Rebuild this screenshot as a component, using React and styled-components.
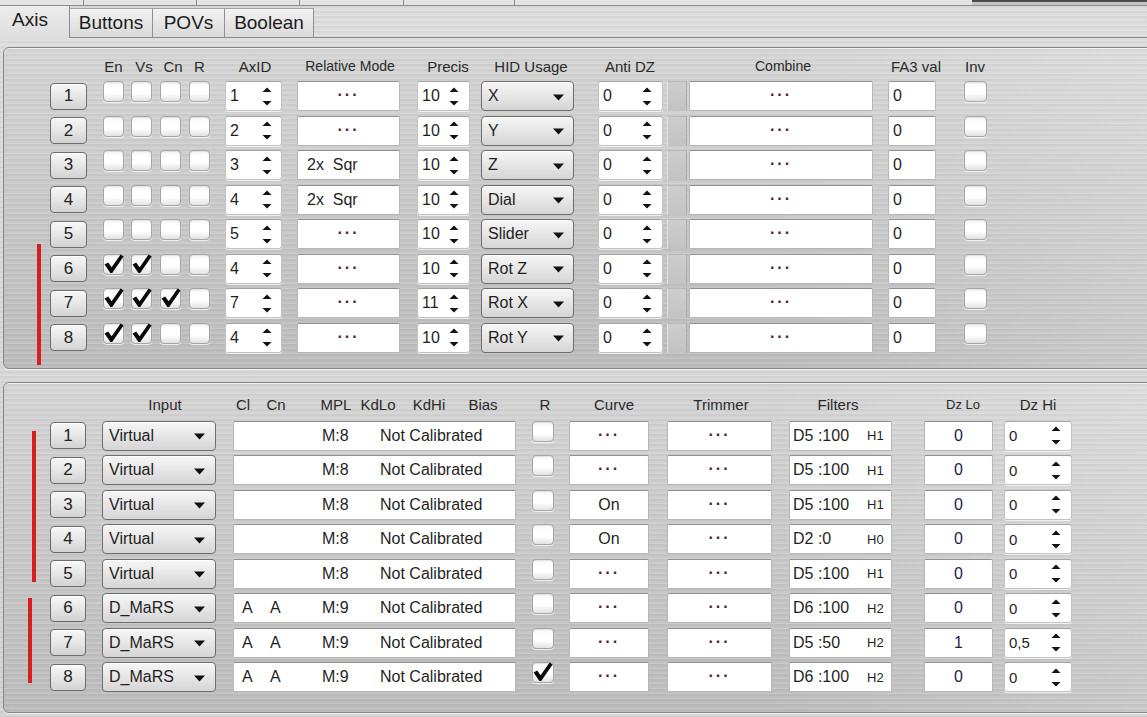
import React from 'react';
import styled, { createGlobalStyle } from 'styled-components';

const GlobalStyle = createGlobalStyle`
  html, body {
    margin: 0;
    padding: 0;
    background: #cfcfcf;
    overflow: hidden;
  }
  body {
    font-family: "Liberation Sans", Arial, sans-serif;
    color: #1f1f1f;
  }
`;

const brushed = `repeating-linear-gradient(180deg, rgba(255,255,255,0.12) 0px, rgba(255,255,255,0.12) 1px, rgba(0,0,0,0.03) 1px, rgba(0,0,0,0.03) 3px, rgba(255,255,255,0) 3px, rgba(255,255,255,0) 5px)`;

// turns [x0, x1] spans (page coords) into width + left margin for flex rows
const BASE = 4;
const place = (spans) => {
  let prev = BASE;
  return spans.map(([x0, x1]) => {
    const r = { $ml: x0 - prev, $w: x1 - x0 };
    prev = x1;
    return r;
  });
};

const Window = styled.div`
  width: 1147px;
  height: 717px;
  overflow: hidden;
  background: ${brushed}, linear-gradient(180deg, #dedede 0%, #d3d3d3 100%);
`;

const OldTabs = styled.div`
  display: flex;
  height: 5px;
  border-bottom: 1px solid #8e8e8e;
  background: #e4e4e4;
`;

const OldTab = styled.div`
  flex: none;
  width: ${(p) => p.$w}px;
  border-right: ${(p) => (p.$edge ? '1px solid #8a8a8a' : 'none')};
  background: ${(p) => (p.$dark ? 'linear-gradient(#4c4c4c 0 2px, #c4c4c4 2px)' : 'transparent')};
`;

const TabBar = styled.div`
  display: flex;
  align-items: flex-end;
  height: 31px;
  border-bottom: 1px solid #8a8a8a;
`;

const Tab = styled.div`
  flex: none;
  box-sizing: border-box;
  width: ${(p) => p.$w}px;
  height: ${(p) => (p.$active ? 32 : 29)}px;
  margin-bottom: ${(p) => (p.$active ? -1 : 0)}px;
  display: flex;
  justify-content: center;
  align-items: ${(p) => (p.$active ? 'flex-start' : 'center')};
  padding: ${(p) => (p.$active ? '3px 9px 0 0' : '0')};
  font-size: 19px;
  color: #1c1c1c;
  border-right: 1px solid #8f8f8f;
  border-top: ${(p) => (p.$active ? 'none' : '1px solid #a4a4a4')};
  background: ${(p) =>
    p.$active ? 'linear-gradient(#ececec, #dedede)' : 'linear-gradient(#f3f3f3, #d9d9d9)'};
`;

const Content = styled.div`
  display: flex;
  flex-direction: column;
  gap: 13px;
  padding: 9px 0 0 3px;
`;

const Panel = styled.section`
  position: relative;
  width: 1170px;
  border: 1px solid #868686;
  border-radius: 6px;
  padding: ${(p) => p.$pt}px 0 ${(p) => p.$pb}px 0;
  background: ${brushed},
    linear-gradient(90deg, rgba(255,255,255,0) 65%, rgba(255,255,255,0.2) 100%),
    linear-gradient(180deg, #d6d6d6 0%, #c8c8c8 55%, #bdbdbd 100%);
  box-shadow: 0 1px 0 #f2f2f2, inset 0 1px 0 rgba(255,255,255,0.6);
`;

const Marker = styled.div`
  position: absolute;
  left: ${(p) => p.$x}px;
  top: ${(p) => p.$y}px;
  width: 4px;
  height: ${(p) => p.$h}px;
  background: #d81e1e;
`;

const Header = styled.div`
  display: flex;
  align-items: center;
  height: 22px;
`;

const HeadLabel = styled.div`
  flex: none;
  width: ${(p) => p.$w}px;
  margin-left: ${(p) => p.$ml}px;
  text-align: center;
  white-space: nowrap;
  font-size: ${(p) => p.$fs || 15}px;
  color: #2a2a2a;
`;

const Rows = styled.div`
  display: flex;
  flex-direction: column;
  gap: 4.5px;
  margin-top: ${(p) => p.$mt}px;
`;

const Row = styled.div`
  display: flex;
  height: 30px;
`;

const Col = styled.div`
  flex: none;
  width: ${(p) => p.$w}px;
  margin-left: ${(p) => p.$ml}px;
  height: 30px;
  display: flex;
  align-items: ${(p) => (p.$top ? 'flex-start' : 'center')};
`;

const NumButton = styled.div`
  box-sizing: border-box;
  width: 100%;
  height: 27px;
  display: flex;
  align-items: center;
  justify-content: center;
  font-size: 17px;
  color: #222;
  border: 1px solid #6c6c6c;
  border-radius: 4px;
  background: linear-gradient(#f7f7f7, #e6e6e6 50%, #d2d2d2);
  box-shadow: inset 0 1px 0 #ffffff;
`;

const Box = styled.div`
  position: relative;
  box-sizing: border-box;
  width: 100%;
  height: 21px;
  border: 1px solid #a6a6a6;
  border-radius: 4px;
  background: linear-gradient(#f4f4f4, #ffffff 30%, #ffffff 60%, #e2e2e2);
  box-shadow: 0 1px 1px rgba(255, 255, 255, 0.8), inset 0 1px 1px rgba(0, 0, 0, 0.08);
`;

const Tick = styled.svg`
  position: absolute;
  left: 0;
  top: -1px;
`;

function CheckBox({ checked }) {
  return (
    <Box>
      {checked ? (
        <Tick width="20" height="20" viewBox="0 0 20 20">
          <polygon points="0.5,10.5 4.2,8.4 7.6,13.2 16.6,0.6 19.6,2.6 8.2,19 6.4,19" fill="#0a0a0a" />
        </Tick>
      ) : null}
    </Box>
  );
}

const SpinBox = styled.div`
  box-sizing: border-box;
  width: 100%;
  height: 30px;
  display: flex;
  align-items: center;
  justify-content: space-between;
  padding: 0 ${(p) => p.$pr || 9}px 0 4px;
  background: #ffffff;
  border: 1px solid #c2c2c2;
  border-top-color: #a4a4a4;
  border-radius: 3px;
  box-shadow: 0 1px 0 rgba(255, 255, 255, 0.7);
  font-size: ${(p) => p.$fs || 16}px;
`;

function Spinner({ value, pr, fs }) {
  return (
    <SpinBox $pr={pr} $fs={fs}>
      <span>{value}</span>
      <svg width="10" height="19" viewBox="0 0 10 19">
        <polygon points="0.5,5 5,0.6 9.5,5" fill="#111" />
        <polygon points="0.5,14 9.5,14 5,18.4" fill="#111" />
      </svg>
    </SpinBox>
  );
}

const DropBox = styled.div`
  box-sizing: border-box;
  width: 100%;
  height: 30px;
  display: flex;
  align-items: center;
  justify-content: space-between;
  padding: 0 ${(p) => p.$pr || 9}px 0 6px;
  border: 1px solid #6e6e6e;
  border-radius: 4px;
  background: linear-gradient(#f6f6f6, #e6e6e6 50%, #d5d5d5);
  box-shadow: inset 0 1px 0 #ffffff;
  font-size: 16px;
`;

function Dropdown({ value, pr }) {
  return (
    <DropBox $pr={pr}>
      <span>{value}</span>
      <svg width="11" height="7" viewBox="0 0 11 7" style={{ marginTop: 2 }}>
        <polygon points="0,0.5 11,0.5 5.5,6.5" fill="#111" />
      </svg>
    </DropBox>
  );
}

const TextBox = styled.div`
  box-sizing: border-box;
  width: 100%;
  height: 30px;
  display: flex;
  align-items: center;
  justify-content: ${(p) => p.$align || 'center'};
  padding-left: ${(p) => p.$pad || 0}px;
  background: #ffffff;
  border: 1px solid #b6b6b6;
  border-top-color: #909090;
  border-radius: 2px;
  font-size: 16px;
  white-space: pre;
  color: ${(p) => p.$color || '#1f1f1f'};
`;

const Dots = styled.span`
  font-size: 16px;
  letter-spacing: 2px;
  color: #4a2636;
  font-weight: bold;
  margin-top: -2px;
`;

const GrayBar = styled.div`
  box-sizing: border-box;
  width: 100%;
  height: 30px;
  background: linear-gradient(#cdcdcd, #c3c3c3);
  border-left: 1px solid #e2e2e2;
  border-right: 1px solid #acacac;
  border-top: 1px solid #b8b8b8;
`;

const CalSpan = styled.span`
  flex: none;
  width: ${(p) => (p.$w ? `${p.$w}px` : 'auto')};
  margin-left: ${(p) => p.$ml || 0}px;
`;

const FilterMain = styled.span`
  flex: none;
  width: 74px;
`;

const FilterTag = styled.span`
  font-size: 13px;
`;

/* ---------- data ---------- */

const TOP_COLS = place([
  [50, 87], [103, 124], [131, 152], [160, 181], [189, 210], [225, 282], [297, 400],
  [417, 470], [481, 574], [598, 663], [667, 687], [689, 873], [888, 936], [964, 987],
]);

const TOP_HEAD = [
  ['En', [103, 124]], ['Vs', [133, 155]], ['Cn', [162, 184]], ['R', [189, 210]],
  ['AxID', [225, 285]], ['Relative Mode', [297, 403], 14], ['Precis', [420, 476]],
  ['HID Usage', [481, 581]], ['Anti DZ', [598, 662]], ['Combine', [733, 833], 14],
  ['FA3 val', [886, 946]], ['Inv', [963, 987]],
];

const BOT_COLS = place([
  [50, 86], [102, 216], [233, 516], [532, 554], [569, 649], [667, 772], [789, 892],
  [924, 993], [1004, 1072],
]);

const BOT_HEAD = [
  ['Input', [102, 228]], ['Cl', [233, 253]], ['Cn', [262, 290]], ['MPL', [320, 352]],
  ['KdLo', [360, 396]], ['KdHi', [410, 448]], ['Bias', [466, 500]], ['R', [535, 555]],
  ['Curve', [574, 654]], ['Trimmer', [667, 775]], ['Filters', [789, 887]],
  ['Dz Lo', [928, 998], 13], ['Dz Hi', [1008, 1068]],
];

const axes = [
  { n: 1, checks: [0, 0, 0, 0], axid: 1, rel: null, prec: 10, hid: 'X' },
  { n: 2, checks: [0, 0, 0, 0], axid: 2, rel: null, prec: 10, hid: 'Y' },
  { n: 3, checks: [0, 0, 0, 0], axid: 3, rel: '2x  Sqr', prec: 10, hid: 'Z' },
  { n: 4, checks: [0, 0, 0, 0], axid: 4, rel: '2x  Sqr', prec: 10, hid: 'Dial' },
  { n: 5, checks: [0, 0, 0, 0], axid: 5, rel: null, prec: 10, hid: 'Slider' },
  { n: 6, checks: [1, 1, 0, 0], axid: 4, rel: null, prec: 10, hid: 'Rot Z' },
  { n: 7, checks: [1, 1, 1, 0], axid: 7, rel: null, prec: 11, hid: 'Rot X' },
  { n: 8, checks: [1, 1, 0, 0], axid: 4, rel: null, prec: 10, hid: 'Rot Y' },
];

const inputs = [
  { n: 1, src: 'Virtual', cal: false, mpl: 'M:8', r: 0, curve: null, filt: 'D5 :100', tag: 'H1', lo: '0', hi: '0' },
  { n: 2, src: 'Virtual', cal: false, mpl: 'M:8', r: 0, curve: null, filt: 'D5 :100', tag: 'H1', lo: '0', hi: '0' },
  { n: 3, src: 'Virtual', cal: false, mpl: 'M:8', r: 0, curve: 'On', filt: 'D5 :100', tag: 'H1', lo: '0', hi: '0' },
  { n: 4, src: 'Virtual', cal: false, mpl: 'M:8', r: 0, curve: 'On', filt: 'D2 :0', tag: 'H0', lo: '0', hi: '0' },
  { n: 5, src: 'Virtual', cal: false, mpl: 'M:8', r: 0, curve: null, filt: 'D5 :100', tag: 'H1', lo: '0', hi: '0' },
  { n: 6, src: 'D_MaRS', cal: true, mpl: 'M:9', r: 0, curve: null, filt: 'D6 :100', tag: 'H2', lo: '0', hi: '0' },
  { n: 7, src: 'D_MaRS', cal: true, mpl: 'M:9', r: 0, curve: null, filt: 'D5 :50', tag: 'H2', lo: '1', hi: '0,5' },
  { n: 8, src: 'D_MaRS', cal: true, mpl: 'M:9', r: 1, curve: null, filt: 'D6 :100', tag: 'H2', lo: '0', hi: '0' },
];

function HeadRow({ items }) {
  const spots = place(items.map((h) => h[1]));
  return (
    <Header>
      {items.map((h, i) => (
        <HeadLabel key={h[0] + i} {...spots[i]} $fs={h[2]}>
          {h[0]}
        </HeadLabel>
      ))}
    </Header>
  );
}

function AxisPanel() {
  const c = TOP_COLS;
  return (
    <Panel $pt={7} $pb={15}>
      <Marker $x={33} $y={196} $h={121} />
      <HeadRow items={TOP_HEAD} />
      <Rows $mt={4}>
        {axes.map((r) => (
          <Row key={r.n}>
            <Col {...c[0]}>
              <NumButton>{r.n}</NumButton>
            </Col>
            {r.checks.map((v, i) => (
              <Col key={i} {...c[1 + i]} $top>
                <CheckBox checked={v} />
              </Col>
            ))}
            <Col {...c[5]}>
              <Spinner value={r.axid} />
            </Col>
            <Col {...c[6]}>
              {r.rel ? (
                <TextBox $align="flex-start" $pad={9}>{r.rel}</TextBox>
              ) : (
                <TextBox><Dots>···</Dots></TextBox>
              )}
            </Col>
            <Col {...c[7]}>
              <Spinner value={r.prec} pr={10} />
            </Col>
            <Col {...c[8]}>
              <Dropdown value={r.hid} />
            </Col>
            <Col {...c[9]}>
              <Spinner value="0" pr={10} />
            </Col>
            <Col {...c[10]}>
              <GrayBar />
            </Col>
            <Col {...c[11]}>
              <TextBox><Dots>···</Dots></TextBox>
            </Col>
            <Col {...c[12]}>
              <TextBox $align="flex-start" $pad={4}>0</TextBox>
            </Col>
            <Col {...c[13]} $top>
              <CheckBox />
            </Col>
          </Row>
        ))}
      </Rows>
    </Panel>
  );
}

function InputPanel() {
  const c = BOT_COLS;
  return (
    <Panel $pt={11} $pb={20}>
      <Marker $x={28} $y={48} $h={151} />
      <Marker $x={24} $y={215} $h={85} />
      <HeadRow items={BOT_HEAD} />
      <Rows $mt={5}>
        {inputs.map((r) => (
          <Row key={r.n}>
            <Col {...c[0]}>
              <NumButton>{r.n}</NumButton>
            </Col>
            <Col {...c[1]}>
              <Dropdown value={r.src} pr={10} />
            </Col>
            <Col {...c[2]}>
              <TextBox $align="flex-start">
                <CalSpan $ml={8} $w={28}>{r.cal ? 'A' : ''}</CalSpan>
                <CalSpan $w={52}>{r.cal ? 'A' : ''}</CalSpan>
                <CalSpan $w={58}>{r.mpl}</CalSpan>
                <CalSpan>Not Calibrated</CalSpan>
              </TextBox>
            </Col>
            <Col {...c[3]} $top>
              <CheckBox checked={r.r} />
            </Col>
            <Col {...c[4]}>
              <TextBox>{r.curve ? r.curve : <Dots>···</Dots>}</TextBox>
            </Col>
            <Col {...c[5]}>
              <TextBox><Dots>···</Dots></TextBox>
            </Col>
            <Col {...c[6]}>
              <TextBox $align="flex-start" $pad={3}>
                <FilterMain>{r.filt}</FilterMain>
                <FilterTag>{r.tag}</FilterTag>
              </TextBox>
            </Col>
            <Col {...c[7]}>
              <TextBox $color="#22224a">{r.lo}</TextBox>
            </Col>
            <Col {...c[8]}>
              <Spinner value={r.hi} pr={10} fs={15} />
            </Col>
          </Row>
        ))}
      </Rows>
    </Panel>
  );
}

export default function App() {
  return (
    <Window>
      <GlobalStyle />
      <OldTabs>
        <OldTab $w={83} $edge />
        <OldTab $w={112} $edge />
        <OldTab $w={102} $edge />
        <OldTab $w={103} $edge />
        <OldTab $w={110} $edge />
        <OldTab $w={457} />
        <OldTab $w={180} $dark />
      </OldTabs>
      <TabBar>
        <Tab $w={70} $active>Axis</Tab>
        <Tab $w={83}>Buttons</Tab>
        <Tab $w={72}>POVs</Tab>
        <Tab $w={89}>Boolean</Tab>
      </TabBar>
      <Content>
        <AxisPanel />
        <InputPanel />
      </Content>
    </Window>
  );
}
